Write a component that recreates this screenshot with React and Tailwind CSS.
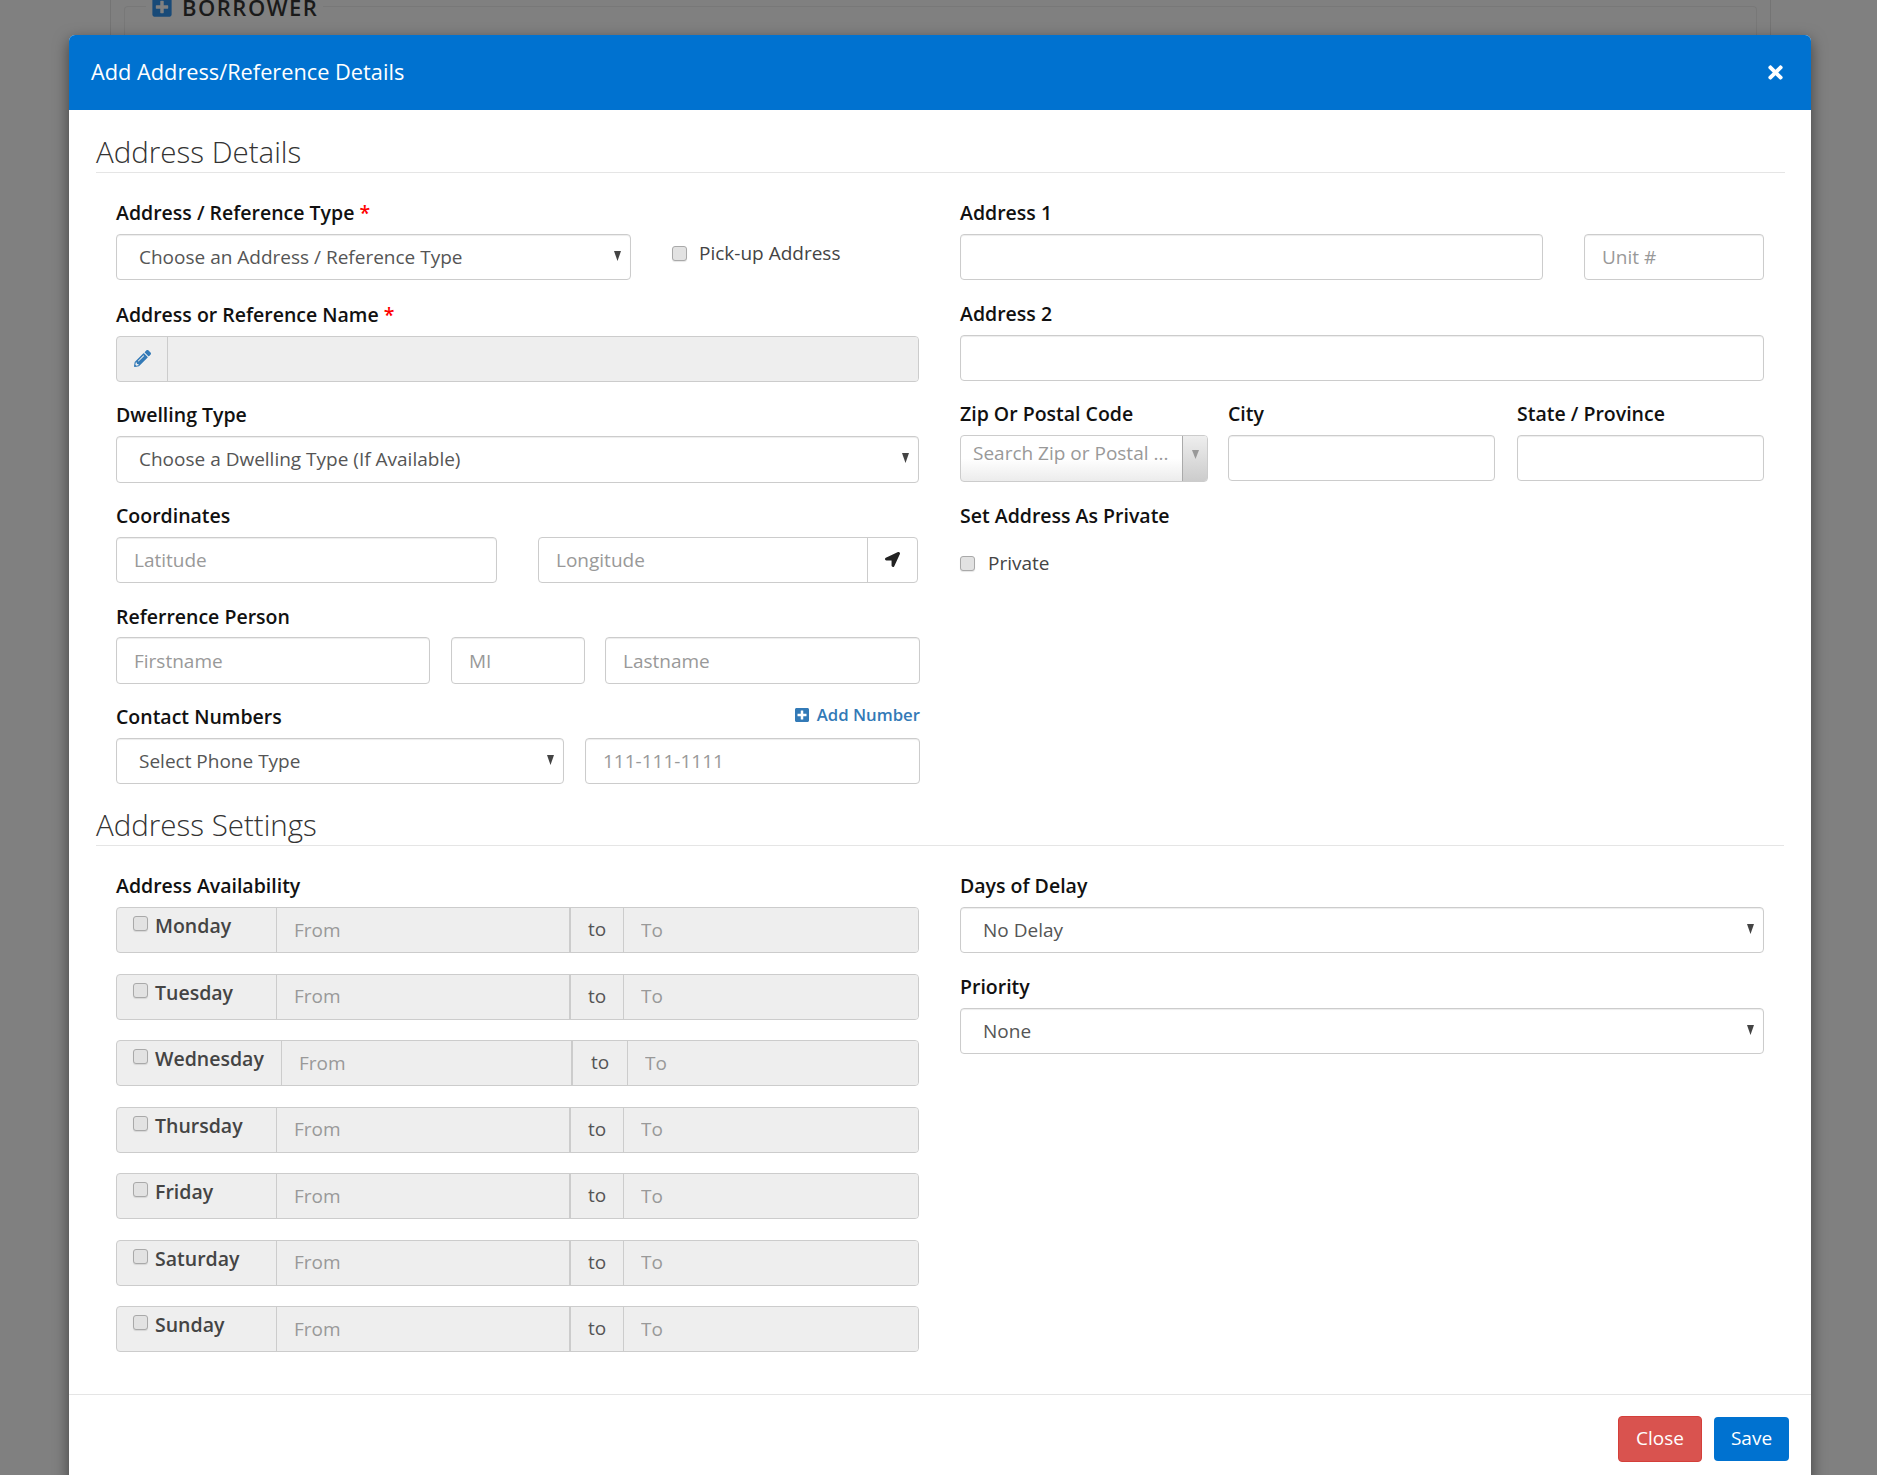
import { FaLocationArrow, FaPencilAlt, FaPlusSquare, FaTimes } from 'react-icons/fa';

const days = ['Monday', 'Tuesday', 'Wednesday', 'Thursday', 'Friday', 'Saturday', 'Sunday'];

const boxClass =
  'h-[46px] w-full shrink-0 rounded-[4px] border border-[#ccc] bg-white px-[17px] text-[19px] text-[#555] placeholder:text-[#999] shadow-[inset_0_1px_1px_rgba(0,0,0,0.075)] outline-none';

const Label = ({ children, required, className = '' }) => (
  <label className={`block h-[27px] text-[19.5px] leading-[27px] font-semibold whitespace-nowrap text-[#111] ${className}`}>
    {children}
    {required && <span className="text-[#f00]"> *</span>}
  </label>
);

const Input = ({ className = '', ...props }) => <input className={`${boxClass} ${className}`} {...props} />;

const Select = ({ text, className = '', selectClassName = '' }) => (
  <div className={`relative ${className}`}>
    <select className={`${boxClass} appearance-none pl-[22px] ${selectClassName}`} defaultValue={text}>
      <option>{text}</option>
    </select>
    <svg className="absolute top-[17px] right-[10px] h-[10px] w-[7px]" viewBox="0 0 7 10">
      <path d="M0 0h7L3.5 10z" fill="#444" />
    </svg>
  </div>
);

const Checkbox = ({ className = '' }) => (
  <input
    type="checkbox"
    className={`h-[15px] w-[15px] shrink-0 appearance-none rounded-[3px] border border-[#a9a9a9] bg-[#e2e2e2] shadow-[0_1px_1px_rgba(0,0,0,0.1)] ${className}`}
  />
);

const SectionTitle = ({ children, className = '' }) => (
  <h4 className={`h-[41px] border-b border-[#e5e5e5] text-[29.5px] leading-[40px] font-light text-[#333] ${className}`}>{children}</h4>
);

const DayRow = ({ day }) => {
  const wide = day === 'Wednesday';
  return (
    <div className="flex h-[46px] overflow-hidden rounded-[4px] border border-[#ccc] bg-[#eee] text-[19px]">
      <div className={`flex shrink-0 items-start gap-[7px] border-r border-[#ccc] pt-[3px] pl-[16px] ${wide ? 'w-[165px]' : 'w-[160px]'}`}>
        <Checkbox className="mt-[5px]" />
        <span className="text-[19.5px] font-semibold text-[#444]">{day}</span>
      </div>
      <input disabled placeholder="From" className={`min-w-0 shrink-0 border-r-2 border-[#ccc] bg-[#eee] pl-[17px] placeholder:text-[#999] ${wide ? 'w-[291px]' : 'w-[294px]'}`} />
      <div className={`flex shrink-0 items-center justify-center border-r border-[#ccc] pb-[1px] text-[#555] ${wide ? 'w-[55px]' : 'w-[53px]'}`}>to</div>
      <input disabled placeholder="To" className="min-w-0 flex-1 bg-[#eee] pl-[17px] placeholder:text-[#999]" />
    </div>
  );
};

export default function App() {
  return (
    <div className="relative h-[1475px] w-[1877px] overflow-hidden bg-[#808080] font-['Open_Sans',sans-serif]">
      {/* page behind the backdrop */}
      <div className="mr-[106px] ml-[110px] h-[60px] border-x border-[#747474] px-[13px] pt-[6px]">
        <div className="h-full rounded-tl-[4px] rounded-tr-[4px] border border-b-0 border-[#787878]" />
      </div>
      <div className="absolute top-[-7px] left-[146px] flex items-center gap-[9px] bg-[#808080] px-[5px] text-[22px] leading-[28px] font-semibold tracking-[1.5px] text-[#1a1a1a]">
        <FaPlusSquare className="text-[22px] text-[#184a78]" />
        BORROWER
      </div>

      {/* modal */}
      <div className="absolute top-[35px] left-[69px] flex w-[1742px] flex-col rounded-t-[6px] bg-white shadow-[0_5px_15px_rgba(0,0,0,0.5)]">
        <div className="flex h-[75px] items-center justify-between rounded-t-[6px] bg-[#0072d0] pr-[25px] pl-[22px] text-white">
          <h3 className="text-[21.75px] font-normal">Add Address/Reference Details</h3>
          <FaTimes className="text-[21px]" />
        </div>

        <div className="px-[27px] pt-[22px]">
          <SectionTitle className="-mr-px">Address Details</SectionTitle>

          <div className="mt-[26px] grid grid-cols-[803px_804px] gap-x-[41px] px-[20px]">
            {/* left column */}
            <div>
              <Label required>Address / Reference Type</Label>
              <div className="mt-[8px] flex items-center">
                <Select text="Choose an Address / Reference Type" className="w-[515px]" />
                <label className="mb-[8px] ml-[41px] flex items-center gap-[12px] text-[19px] text-[#444]">
                  <Checkbox />
                  Pick-up Address
                </label>
              </div>

              <Label required className="mt-[21px]">Address or Reference Name</Label>
              <div className="mt-[8px] flex h-[46px] overflow-hidden rounded-[4px] border border-[#ccc] bg-[#eee]">
                <div className="flex w-[51px] items-center justify-center border-r border-[#ccc] pb-[2px]">
                  <FaPencilAlt className="text-[17px] text-[#337ab7]" />
                </div>
                <input disabled className="flex-1 bg-[#eee]" />
              </div>

              <Label className="mt-[19px]">Dwelling Type</Label>
              <Select text="Choose a Dwelling Type (If Available)" className="mt-[8px]" selectClassName="h-[47px]!" />

              <Label className="mt-[19px]">Coordinates</Label>
              <div className="mt-[8px] flex justify-between">
                <Input placeholder="Latitude" className="w-[381px]!" />
                <div className="mr-px flex h-[46px] w-[380px] overflow-hidden rounded-[4px] border border-[#ccc]">
                  <input placeholder="Longitude" className="min-w-0 flex-1 px-[17px] text-[19px] placeholder:text-[#999] outline-none" />
                  <div className="flex w-[50px] items-center justify-center border-l border-[#ccc] pb-[2px]">
                    <FaLocationArrow className="text-[15px] text-[#222]" />
                  </div>
                </div>
              </div>

              <Label className="mt-[20px]">Referrence Person</Label>
              <div className="mt-[7px] flex">
                <Input placeholder="Firstname" className="h-[47px]! w-[314px]!" />
                <Input placeholder="MI" className="ml-[21px] h-[47px]! w-[134px]!" />
                <Input placeholder="Lastname" className="ml-[20px] h-[47px]! w-[315px]!" />
              </div>

              <div className="mt-[19px] flex items-start justify-between">
                <Label>Contact Numbers</Label>
                <a className="-mr-px flex items-center gap-[7px] text-[16.75px] leading-[24px] font-semibold text-[#337ab7]">
                  <FaPlusSquare className="text-[16px]" />
                  Add Number
                </a>
              </div>
              <div className="mt-[8px] flex">
                <Select text="Select Phone Type" className="w-[448px] shrink-0" />
                <Input placeholder="111-111-1111" className="ml-[21px] w-[335px]!" />
              </div>
            </div>

            {/* right column */}
            <div>
              <Label>Address 1</Label>
              <div className="mt-[8px] flex justify-between">
                <Input className="w-[583px]!" />
                <Input placeholder="Unit #" className="w-[180px]!" />
              </div>

              <Label className="mt-[20px]">Address 2</Label>
              <Input className="mt-[8px] block" />

              <div className="mt-[19px] flex">
                <div className="w-[248px]">
                  <Label>Zip Or Postal Code</Label>
                  <div className="mt-[8px] flex h-[47px] overflow-hidden rounded-[4px] border border-[#ccc] bg-gradient-to-b from-white via-white to-[#ececec]">
                    <div className="min-w-0 flex-1 truncate pt-[3px] pl-[12px] text-[19px] text-[#999]">Search Zip or Postal ...</div>
                    <div className="flex w-[25px] shrink-0 justify-center border-l border-[#aaa] bg-gradient-to-b from-[#eee] to-[#ccc] pt-[14px]">
                      <svg className="h-[9px] w-[7px]" viewBox="0 0 7 9"><path d="M0 0h7L3.5 9z" fill="#999" /></svg>
                    </div>
                  </div>
                </div>
                <div className="ml-[20px] w-[267px]">
                  <Label>City</Label>
                  <Input className="mt-[8px] block" />
                </div>
                <div className="ml-[22px] w-[247px]">
                  <Label>State / Province</Label>
                  <Input className="mt-[8px] block" />
                </div>
              </div>

              <Label className="mt-[20px]">Set Address As Private</Label>
              <label className="mt-[20px] flex items-center gap-[13px] text-[19px] text-[#444]">
                <Checkbox />
                Private
              </label>
            </div>
          </div>

          <SectionTitle className="mt-[21px]">Address Settings</SectionTitle>

          <div className="mt-[26px] grid grid-cols-[803px_804px] gap-x-[41px] px-[20px]">
            <div>
              <Label>Address Availability</Label>
              <div className="mt-[8px] flex flex-col gap-[20.5px]">
                {days.map((day) => (
                  <DayRow key={day} day={day} />
                ))}
              </div>
            </div>
            <div>
              <Label>Days of Delay</Label>
              <Select text="No Delay" className="mt-[8px]" />
              <Label className="mt-[20px]">Priority</Label>
              <Select text="None" className="mt-[8px]" />
            </div>
          </div>
        </div>

        <div className="mt-[42px] flex items-center justify-end gap-[12px] border-t border-[#e5e5e5] pt-[21px] pr-[22px] pb-[20px]">
          <button className="h-[46px] w-[84px] rounded-[4px] border border-[#d43f3a] bg-[#d9534f] pb-[2px] text-[19px] text-white">Close</button>
          <button className="h-[44px] w-[75px] rounded-[4px] bg-[#0072d0] pb-[2px] text-[19px] text-white">Save</button>
        </div>
      </div>
    </div>
  );
}
